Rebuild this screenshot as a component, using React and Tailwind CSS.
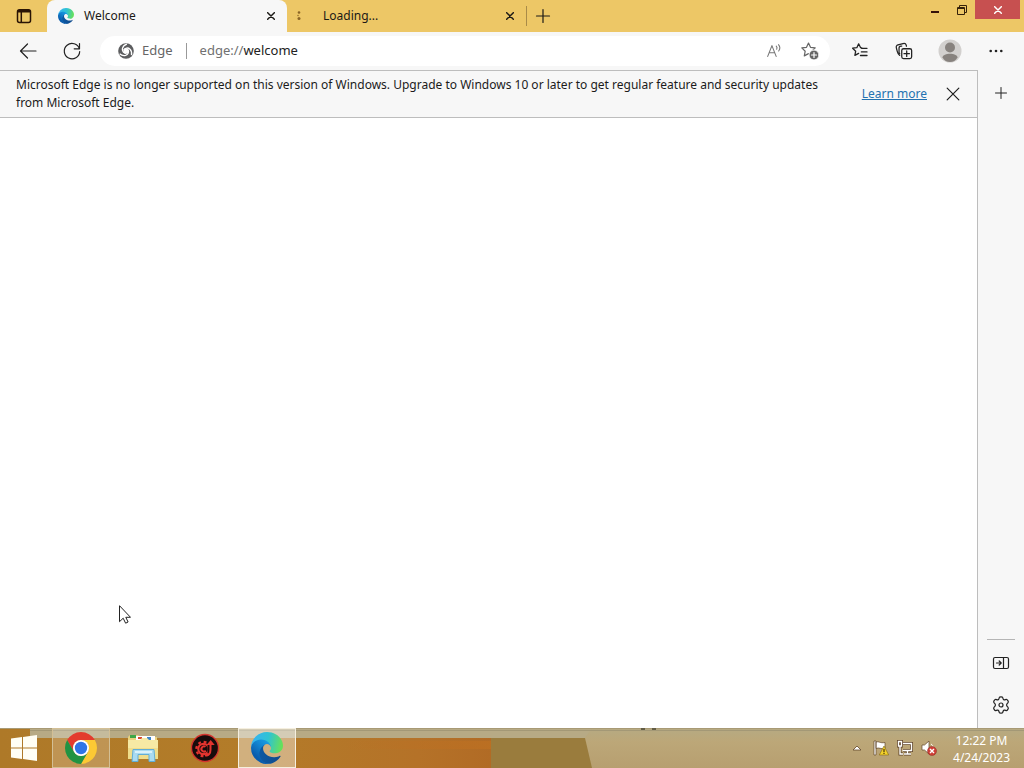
import React from 'react';

function EdgeLogo({ id, className }) {
  return (
    <svg viewBox="0 0 256 256" className={className} aria-hidden="true">
      <defs>
        <linearGradient id={`${id}-a`} x1="60" y1="178" x2="241" y2="178" gradientUnits="userSpaceOnUse">
          <stop stopColor="#0c59a4" />
          <stop offset="1" stopColor="#114a8b" />
        </linearGradient>
        <linearGradient id={`${id}-b`} x1="152" y1="86" x2="46" y2="202" gradientUnits="userSpaceOnUse">
          <stop stopColor="#1b9de2" />
          <stop offset="0.4" stopColor="#1387d3" />
          <stop offset="1" stopColor="#0a5cac" />
        </linearGradient>
        <linearGradient id={`${id}-c`} x1="20" y1="60" x2="245" y2="110" gradientUnits="userSpaceOnUse">
          <stop stopColor="#35b4ee" />
          <stop offset="0.5" stopColor="#2fc3d2" />
          <stop offset="1" stopColor="#66e05a" />
        </linearGradient>
      </defs>
      <path fill={`url(#${id}-a)`} d="M231 190.5c-3.4 1.8-6.9 3.4-10.5 4.7a101.5 101.5 0 0 1-35.9 6.5c-47.3 0-88.5-32.5-88.5-74.3a31.5 31.5 0 0 1 16.4-27.3c-42.8 1.8-53.8 46.4-53.8 72.5 0 74 68.1 81.4 82.8 81.4 7.9 0 19.8-2.3 27-4.6l1.3-.4a128.3 128.3 0 0 0 66.6-52.8 4 4 0 0 0-5.4-5.7Z" />
      <path fill={`url(#${id}-b)`} d="M105.7 241.4a79.2 79.2 0 0 1-22.7-21.3 80.7 80.7 0 0 1 29.5-120c3.2-1.5 8.5-4.1 15.6-4a32.4 32.4 0 0 1 25.7 13 31.9 31.9 0 0 1 6.3 18.7c0-.2 24.5-79.6-80-79.6-43.9 0-80 41.6-80 78.2a130.2 130.2 0 0 0 12.1 56 128 128 0 0 0 156.4 67 75.5 75.5 0 0 1-62.8-8Z" />
      <path fill={`url(#${id}-c)`} d="M152.3 148.9c-.9 1-3.4 2.5-3.4 5.6 0 2.6 1.7 5.2 4.8 7.3 14.3 10 41.4 8.6 41.5 8.6a59.6 59.6 0 0 0 30.3-8.3 61.4 61.4 0 0 0 30.4-52.9c.3-22.4-8-37.3-11.3-43.9C223.5 23.9 177.7 0 128 0A128 128 0 0 0 0 126.2c.5-36.5 36.8-66 80-66 3.5 0 23.5.3 42 10a72.6 72.6 0 0 1 30.9 29.3c6.1 10.6 7.2 24.1 7.2 29.5s-2.7 13.3-7.8 19.9Z" />
    </svg>
  );
}

function ChromeLogo() {
  return (
    <svg viewBox="0 0 48 48" className="size-8" aria-hidden="true">
      <path fill="#e33b2e" d="M24 12h20.780a24 24 0 0 0-41.560 0L13.600 30A12 12 0 0 1 24 12Z" />
      <path fill="#fcc934" d="M34.390 30 24 48a24 24 0 0 0 20.780-36H24a12 12 0 0 1 10.390 18Z" />
      <path fill="#229342" d="M13.600 30 3.220 12A24 24 0 0 0 24 48l10.390-18a12 12 0 0 1-20.790 0Z" />
      <circle cx="24" cy="24" r="12" fill="#fff" />
      <circle cx="24" cy="24" r="9.300" fill="#2f74e6" />
    </svg>
  );
}

function FolderIcon() {
  return (
    <svg viewBox="0 0 32 30" className="h-[30px] w-8" aria-hidden="true">
      <path fill="#e8d27e" d="M1 4 3 2h8l2 2h17v21H1Z" />
      <path fill="#3fa648" d="M3 2h6v3H3z" />
      <path fill="#fff" d="M9 3h19v5H9z" />
      <path fill="#d9482f" d="M11 4h4v2h-4z" />
      <path fill="#3b84c8" d="M20 4h4v3h-4z" />
      <path fill="#f6e9a4" d="M1 7h12l2-2h5l2 2h9v19H1Z" />
      <path fill="#efdd8b" d="M1 15h30v11H1Z" />
      <path fill="#a9daf0" stroke="#62aed6" strokeWidth="1" d="M6 16.500h21l1 12h-6v-7H11v7H5Z" />
      <path fill="#d9f1fa" d="M8 18h17v2H8z" />
    </svg>
  );
}

function RedGearIcon() {
  return (
    <svg viewBox="0 0 30 30" className="size-[30px]" fill="none" aria-hidden="true">
      <circle cx="15" cy="15" r="13.500" fill="#180c0c" stroke="#d4352f" strokeWidth="1.300" />
      <circle cx="13.500" cy="16" r="5.200" stroke="#e3342f" strokeWidth="2.200" />
      <circle cx="13.500" cy="16" r="7.200" stroke="#e3342f" strokeWidth="2.200" strokeDasharray="2.800 2.850" />
      <path stroke="#180c0c" strokeWidth="5" d="M20 9v11" />
      <path stroke="#e3342f" strokeWidth="2" d="M15.500 13.800a2.600 2.600 0 1 0 .3 4M15 22.500c4 0 5.500-2.500 5.500-6V11" />
      <path fill="#e3342f" d="m16.500 12 4.200-5 4 5Z" />
    </svg>
  );
}

function Icon({ children, className = 'size-5', box = 20, width = 1.2 }) {
  return (
    <svg viewBox={`0 0 ${box} ${box}`} className={className} fill="none" stroke="currentColor" strokeWidth={width} strokeLinecap="round" strokeLinejoin="round" aria-hidden="true">
      {children}
    </svg>
  );
}

function IconButton({ label, className = '', children }) {
  return (
    <button type="button" aria-label={label} className={`flex shrink-0 items-center justify-center ${className}`}>
      {children}
    </button>
  );
}

function Cross({ className, width = 1.5 }) {
  return (
    <Icon className={className} box={12} width={width}>
      <path d="m1 1 10 10M11 1 1 11" />
    </Icon>
  );
}

function TitleBar() {
  return (
    <header className="flex h-8 shrink-0 bg-[#edc766] text-xs text-[#1c1a16]">
      <IconButton label="Tab actions" className="w-[47px] text-[#2a1405]">
        <svg viewBox="0 0 16 16" className="size-4" fill="none" stroke="currentColor" strokeWidth="1.500" aria-hidden="true">
          <rect x="1.500" y="1.800" width="13" height="12.700" rx="2" />
          <path strokeWidth="2.600" d="M2 3.200h12" />
          <path d="M5.300 4v10.500" />
        </svg>
      </IconButton>
      <div className="flex w-60 items-center rounded-t-lg bg-[#f7f7f7] pr-2 pl-[11px]">
        <EdgeLogo id="tab" className="size-4" />
        <span className="ml-2.5 flex-1">Welcome</span>
        <IconButton label="Close Welcome" className="size-4"><Cross className="size-2" width={2.2} /></IconButton>
      </div>
      <div className="flex w-[239px] items-center pr-2 pl-2">
        <svg viewBox="0 0 8 12" className="h-3 w-2 text-[#8a6426]" fill="currentColor" aria-hidden="true">
          <circle cx="4" cy="2.500" r="1.300" /><circle cx="3" cy="5.500" r="0.700" /><circle cx="4" cy="8.500" r="1.500" />
        </svg>
        <span className="ml-5 flex-1">Loading...</span>
        <IconButton label="Close Loading" className="size-4"><Cross className="size-2" width={2.2} /></IconButton>
      </div>
      <div className="h-5 w-px self-center bg-[#a98b48]" />
      <IconButton label="New tab" className="w-8">
        <Icon className="size-4" box={16}><path d="M8 1.500v13M1.500 8h13" /></Icon>
      </IconButton>
      <div className="ml-auto flex items-start pr-1">
        <IconButton label="Minimize" className="h-[19px] w-[26px]">
          <svg viewBox="0 0 8 10" className="h-2.5 w-2" aria-hidden="true"><path fill="#35120a" d="M0 6h8v2H0z" /></svg>
        </IconButton>
        <IconButton label="Restore" className="h-[19px] w-[27px]">
          <svg viewBox="0 0 10 10" className="size-2.5" fill="none" stroke="#35210a" aria-hidden="true">
            <path d="M2.500 2V.5h7v7H8" /><path d="M.5 2.500h7v7h-7z" /><path d="M0 3.500h8" />
          </svg>
        </IconButton>
        <IconButton label="Close" className="h-[19px] w-[45px] bg-[#c75050] text-white"><Cross className="size-2" width={2.2} /></IconButton>
      </div>
    </header>
  );
}

const star = 'm8.500 2 2 4.300 4.700.6-3.400 3.300.9 4.700-4.200-2.300-4.200 2.300.9-4.700L1.800 6.900l4.700-.6Z';

function Toolbar() {
  return (
    <div className="flex h-[38px] shrink-0 items-center bg-[#f7f7f7] pr-3 pl-3 text-[13px] text-[#222]">
      <IconButton label="Back" className="size-8">
        <Icon><path d="M18 10H2.500M9.500 3 2.500 10l7 7" /></Icon>
      </IconButton>
      <IconButton label="Refresh" className="ml-3 size-8">
        <Icon><path d="M17.400 8A7.700 7.700 0 1 0 17.700 10.500M17.500 2.500V7.800h-5.300" /></Icon>
      </IconButton>
      <div className="ml-3 flex h-[30px] min-w-0 flex-1 items-center rounded-full bg-white pr-2 pl-[18px]">
        <svg viewBox="0 0 16 16" className="size-4 shrink-0" fill="none" aria-hidden="true">
          <circle cx="8" cy="8" r="7.800" fill="#5c5d5f" />
          <circle cx="8" cy="8" r="2.700" fill="#fff" />
          <g stroke="#fff" strokeWidth="1.300">
            <path id="blade" d="M5.800 7C7 4.800 10 4.300 12 6.200c1.500 1.500 2 3.500 1.500 6" />
            <path d="M5.800 7C7 4.800 10 4.300 12 6.200c1.500 1.500 2 3.500 1.500 6" transform="rotate(120 8 8)" />
            <path d="M5.800 7C7 4.800 10 4.300 12 6.200c1.500 1.500 2 3.500 1.500 6" transform="rotate(240 8 8)" />
          </g>
        </svg>
        <span className="ml-2 text-[#666]">Edge</span>
        <span className="mx-[13px] h-4 w-px bg-[#999]" />
        <label htmlFor="address" className="text-[#707070]">edge://</label>
        <input id="address" aria-label="Address" defaultValue="welcome" className="min-w-0 flex-1 bg-transparent outline-none" />
        <IconButton label="Read aloud" className="size-6 text-[#777]">
          <Icon className="size-[18px]"><path d="m3 16 4.700-12 4.700 12M4.600 12h6.200M12.500 4.500c1 1 1 2.500.5 3.500M15 3c1.700 2 1.700 5 .2 7" /></Icon>
        </IconButton>
        <IconButton label="Add to favorites" className="ml-3 size-6 text-[#666]">
          <Icon>
            <path d={star} />
            <circle cx="14" cy="14" r="5" fill="#666" stroke="white" strokeWidth="1" />
            <path stroke="white" d="M14 11.500v5M11.500 14h5" />
          </Icon>
        </IconButton>
      </div>
      <IconButton label="Favorites" className="ml-3.5 size-8">
        <Icon className="size-[18px]" width={1.4}><path d="M12 6.500 10.700 6.300 8.500 2 6.500 6.300l-4.700.6 3.400 3.300-.9 4.700 4.200-2.300M11.500 7h6.300M11.500 11h6.300M10.500 15h7.300" /></Icon>
      </IconButton>
      <IconButton label="Collections" className="ml-3 size-8">
        <Icon className="size-[18px]" width={1.4}>
          <rect x="7.500" y="7.500" width="11" height="11" rx="2" />
          <path d="M13 10v6M10 13h6M5.200 14.800C3.500 14 3 12.500 2.500 10.500L1.500 6.500C1 4.800 1.800 3.700 3.300 3.300L9 1.700c1.700-.5 3 .2 3.500 1.800l.2 1.200M7.500 4.500H6.700C5.200 4.500 4.500 5.300 4.500 6.700V11c0 1 .2 1.500.7 2" />
        </Icon>
      </IconButton>
      <IconButton label="Profile" className="ml-3.5 size-8">
        <svg viewBox="0 0 24 24" className="size-6" aria-hidden="true">
          <circle cx="12" cy="12" r="11.500" fill="#d2d0ce" />
          <circle cx="12" cy="8.500" r="5" fill="#87827e" />
          <path fill="#87827e" d="M4.500 18.500C5 13.500 19 13.500 19.500 18.500 18 21.500 15 23 12 23s-6-1.500-7.500-4.500Z" />
        </svg>
      </IconButton>
      <IconButton label="Settings and more" className="ml-3.5 size-8">
        <svg viewBox="0 0 16 4" className="h-1 w-4" fill="currentColor" aria-hidden="true"><circle cx="2.700" cy="2" r="1.300" /><circle cx="8" cy="2" r="1.300" /><circle cx="13.300" cy="2" r="1.300" /></svg>
      </IconButton>
    </div>
  );
}

function Sidebar() {
  return (
    <aside className="flex w-[47px] shrink-0 flex-col items-center border-l border-[#bdbdbd] bg-[#f7f7f7] pb-[7px] text-[#222]">
      <IconButton label="Customize sidebar" className="mt-[7px] size-8">
        <Icon className="size-3" box={12} width={1}><path d="M6 .5v11M.5 6h11" /></Icon>
      </IconButton>
      <div className="mt-auto h-px w-7 bg-[#b5b5b5]" />
      <IconButton label="Hide sidebar" className="mt-[7px] size-8">
        <Icon><rect x="2.500" y="4.500" width="15" height="11" rx="1.500" /><path d="M12.500 4.500v11M5.500 10h4.500M8.200 8l2 2-2 2" /></Icon>
      </IconButton>
      <IconButton label="Settings" className="mt-2.5 size-8">
        <Icon>
          <circle cx="10" cy="10" r="2" />
          <path d="M8.200 2.700C8.500 1.600 11.500 1.600 11.800 2.700L12.200 4c.3.800.8 1 1.600.8l1.400-.4c1.100-.2 2.700 2.400 1.900 3.200l-1 1.100c-.7.800-.7 1.800 0 2.600l1 1.100c.8.800-.8 3.400-1.900 3.200l-1.400-.4c-.8-.2-1.300 0-1.600.8l-.4 1.300c-.3 1.100-3.300 1.100-3.600 0L7.800 16c-.3-.8-.8-1-1.600-.8l-1.400.4c-1.100.2-2.700-2.400-1.900-3.200l1-1.100c.7-.8.700-1.800 0-2.600l-1-1.100C2.100 6.800 3.700 4.200 4.800 4.400l1.400.4C7 5 7.500 4.800 7.800 4Z" />
        </Icon>
      </IconButton>
    </aside>
  );
}

function Taskbar() {
  return (
    <footer className="relative flex h-10 shrink-0 bg-[#baa476] text-white">
      <svg viewBox="0 0 1024 40" preserveAspectRatio="none" className="absolute inset-0 size-full" aria-hidden="true">
        <defs>
          <linearGradient id="wood"><stop stopColor="#ae7928" /><stop offset="0.5" stopColor="#b37c29" /><stop offset="0.85" stopColor="#b57228" /><stop offset="1" stopColor="#b16b25" /></linearGradient>
          <linearGradient id="glow"><stop stopColor="#bd7022" stopOpacity="0" /><stop offset="1" stopColor="#bd7022" stopOpacity="0.800" /></linearGradient>
          <linearGradient id="sand" x2="0" y2="1"><stop stopColor="#b6aa83" /><stop offset="0.35" stopColor="#bca778" /><stop offset="1" stopColor="#b79f70" /></linearGradient>
        </defs>
        <rect width="1024" height="40" fill="url(#sand)" />
        <path fill="url(#wood)" d="M0 0h30v10h462v30H0Z" />
        <path fill="#9a7c3d" d="M491 10h94l7 30H491Z" />
        <path fill="#b7aa85" d="M30 0h562l-7 10H30z" />
        <path fill="url(#glow)" d="M345 13h146v8H345z" />
        <path fill="#a89a75" d="M0 0h1024v1H0z" />
        <path fill="#a39876" d="M30 2h994v1H30z" />
        <path fill="#625c45" d="M641 0h4v2h-4zM652 0h4v2h-4z" />
      </svg>
      <nav aria-label="Taskbar" className="relative flex gap-1">
        <IconButton label="Start" className="w-12">
          <svg viewBox="0 0 28 26" className="h-[26px] w-7" fill="#fffef4" aria-hidden="true"><path d="M1 3.500 12 2v10.500H1ZM13 1.900 27 0v12.500H13ZM1 13.500h11V24L1 22.500ZM13 13.500h14V26l-14-1.900Z" /></svg>
        </IconButton>
        <IconButton label="Google Chrome" className="w-[58px] border border-[#d3bf95] bg-white/20"><ChromeLogo /></IconButton>
        <IconButton label="File Explorer" className="w-[58px]"><FolderIcon /></IconButton>
        <IconButton label="Game tools" className="w-[58px]"><RedGearIcon /></IconButton>
        <IconButton label="Microsoft Edge" className="w-[58px] border border-[#f5efdf] bg-white/40"><EdgeLogo id="task" className="size-8" /></IconButton>
      </nav>
      <div className="relative ml-auto flex items-center pr-3.5">
        <IconButton label="Show hidden icons" className="size-6">
          <svg viewBox="0 0 10 6" className="h-1.5 w-2.5" aria-hidden="true"><path fill="#fff" stroke="#604529" strokeWidth="0.800" d="M1 5 5 1l4 4Z" /></svg>
        </IconButton>
        <IconButton label="Action center" className="size-6">
          <svg viewBox="0 0 16 16" className="size-4" aria-hidden="true">
            <path fill="#fff" stroke="#604529" strokeWidth="0.700" d="M1 1h2v14H1ZM3 2c3-1 4 1.500 9 .5v6C8 9.500 6 7 3 8.500Z" />
            <path fill="#f4d32b" stroke="#806510" strokeWidth="0.600" d="m11 6 4.700 9H6.300Z" /><path fill="#4b3508" d="M10.400 9h1.200v3.200h-1.200zM10.400 13h1.200v1h-1.200z" />
          </svg>
        </IconButton>
        <IconButton label="Network" className="size-6">
          <svg viewBox="0 0 16 16" className="size-4" fill="none" aria-hidden="true">
            <path stroke="#604529" strokeWidth="3" d="M6 3.500h8.500v7H6M10.500 11v3M7 14h7M1.500 1.500h3V6h-3ZM3 6v8h3" />
            <path stroke="#fff" strokeWidth="1.400" d="M6 3.500h8.500v7H5.500M10.500 11v3M7 14h7M1.500 1.500h3V6h-3ZM3 6v8h3" />
          </svg>
        </IconButton>
        <IconButton label="Volume muted" className="size-6">
          <svg viewBox="0 0 16 16" className="size-4" fill="none" aria-hidden="true">
            <path fill="#fff" stroke="#604529" strokeWidth="0.700" d="M1 5h2.500L8 1v13l-4.500-4H1Z" />
            <path stroke="#fff" d="M10 4c1.500 1 2 2 2 3" />
            <circle cx="11" cy="11" r="4.500" fill="#cf3f37" stroke="#8b2823" strokeWidth="0.500" /><path stroke="#fff" strokeWidth="1.400" d="m9 9 4 4M13 9l-4 4" />
          </svg>
        </IconButton>
        <div className="ml-3 pt-0.5 text-center text-xs leading-[17px]">
          <p>12:22 PM</p>
          <p>4/24/2023</p>
        </div>
      </div>
    </footer>
  );
}

export default function App() {
  return (
    <div className="flex h-screen flex-col overflow-hidden bg-white font-['Noto_Sans','Open_Sans',sans-serif]">
      <TitleBar />
      <Toolbar />
      <div className="flex min-h-0 flex-1">
        <div className="flex min-w-0 flex-1 flex-col">
          <section aria-label="Notification" className="flex items-center border-y border-[#bdbdbd] bg-[#f7f7f7] py-[5px] pr-2 pl-4 text-[#1b1b1b]">
            <p className="flex-1 text-xs leading-[18px]">Microsoft Edge is no longer supported on this version of Windows. Upgrade to Windows 10 or later to get regular feature and security updates from Microsoft Edge.</p>
            <a href="#learn-more" className="ml-6 shrink-0 text-xs text-[#2372b0] underline">Learn more</a>
            <IconButton label="Dismiss" className="ml-2.5 size-8"><Cross className="size-3.5" width={1} /></IconButton>
          </section>
          <main className="flex-1 bg-white" />
        </div>
        <Sidebar />
      </div>
      <Taskbar />
      <svg viewBox="0 0 12 19" className="pointer-events-none absolute top-[605px] left-[119px] h-[19px] w-3" aria-hidden="true">
        <path fill="#fff" stroke="#222" d="M.5.700v16l3.700-3.500 2.400 5 2.500-1.200-2.300-4.700h4.700Z" />
      </svg>
    </div>
  );
}
